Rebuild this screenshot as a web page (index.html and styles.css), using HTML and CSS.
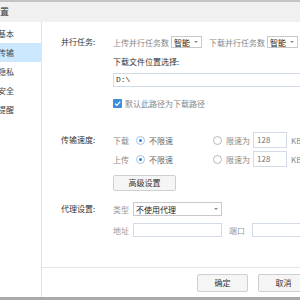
FILE: index.html
```html
<!DOCTYPE html>
<html>
<head>
	<title>设置</title>
	<meta charset="utf-8">
	<link rel="stylesheet" href="styles.css">
</head>
<body>
	<div class="window">
		<div class="title__bar">设置</div>
		<div class="window__body">
			<ul class="side__menu">
				<li>基本</li>
				<li class="active">传输</li>
				<li>隐私</li>
				<li>安全</li>
				<li>提醒</li>
			</ul>

			<div class="panel">
				<div class="form">

					<div class="section section--tasks">
						<div class="label">并行任务:</div>
						<div class="field">
							<div class="row">
								<span class="hint">上传并行任务数</span>
								<span class="select select--small">智能<i class="arrow"></i></span>
								<span class="hint">下载并行任务数</span>
								<span class="select select--small">智能<i class="arrow"></i></span>
							</div>
							<div class="caption">下载文件位置选择:</div>
							<div class="input input--path">D:\</div>
							<div class="row row--check">
								<span class="checkbox">
									<svg width="9" height="9" viewBox="0 0 9 9"><path d="M2 4.6 L3.9 6.4 L7.2 2.6" fill="none" stroke="#fff" stroke-width="1.3"/></svg>
								</span>
								<span class="hint">默认此路径为下载路径</span>
							</div>
						</div>
					</div>

					<div class="section section--speed">
						<div class="label">传输速度:</div>
						<div class="field">
							<div class="row row--speed">
								<span class="hint">下载</span>
								<span class="radio radio--on"></span>
								<span class="option">不限速</span>
								<span class="radio radio--far"></span>
								<span class="hint">限速为</span>
								<span class="input input--rate">128</span>
								<span class="unit">KB/s</span>
							</div>
							<div class="row row--speed row--next">
								<span class="hint">上传</span>
								<span class="radio radio--on"></span>
								<span class="option">不限速</span>
								<span class="radio radio--far"></span>
								<span class="hint">限速为</span>
								<span class="input input--rate">128</span>
								<span class="unit">KB/s</span>
							</div>
							<div class="btn btn--advanced">高级设置</div>
						</div>
					</div>

					<div class="section section--proxy">
						<div class="label">代理设置:</div>
						<div class="field">
							<div class="row row--proxy">
								<span class="hint hint--light">类型</span>
								<span class="select select--wide">不使用代理<i class="arrow"></i></span>
							</div>
							<div class="row row--proxy row--address">
								<span class="hint hint--light">地址</span>
								<span class="input input--address"></span>
								<span class="hint hint--light port__label">端口</span>
								<span class="input input--port"></span>
							</div>
						</div>
					</div>

				</div>

				<div class="footer">
					<div class="btn">确定</div>
					<div class="btn">取消</div>
				</div>
			</div>
		</div>
	</div>
</body>
</html>
```

FILE: styles.css
```css
* {
	box-sizing: border-box;
	margin: 0;
	padding: 0;
}

html, body {
	width: 300px;
	height: 300px;
	overflow: hidden;
}

body {
	font-family: "Noto Sans CJK SC", "Noto Sans", sans-serif;
	font-size: 8px;
	color: #333;
	background: #fff;
}

.window {
	width: 340px;
	height: 300px;
	margin-left: -18px;
	display: flex;
	flex-direction: column;
	border-bottom: 3px solid #a9a9a9;
}

.title__bar {
	flex: none;
	height: 22px;
	background: #f0f0f0;
	border-top: 2px solid #c4c4c4;
	padding-left: 9px;
	font-size: 9px;
	line-height: 20px;
}

.window__body {
	flex: 1;
	display: flex;
	min-width: 0;
}

.side__menu {
	flex: none;
	list-style: none;
	width: 60px;
	border-right: 1px solid #e3e3e3;
	padding-top: 2px;
}

.side__menu li {
	height: 19px;
	line-height: 19px;
	padding-left: 16px;
	color: #444;
}

.side__menu .active {
	background: #cce8ff;
}

.panel {
	flex: 1;
	min-width: 0;
	display: flex;
	flex-direction: column;
}

.form {
	flex: 1;
	padding-left: 19px;
}

.section {
	display: grid;
	grid-template-columns: 52px 1fr;
}

.section--tasks {
	margin-top: 14px;
}

.section--speed {
	margin-top: 23px;
}

.section--proxy {
	margin-top: 11px;
}

.label {
	line-height: 12px;
}

.section--speed .label {
	line-height: 16px;
}

.section--proxy .label {
	line-height: 14px;
}

.row {
	display: flex;
	align-items: center;
	height: 12px;
	white-space: nowrap;
}

.hint {
	color: #888;
}

.hint--light {
	color: #999;
}

.select {
	flex: none;
	display: flex;
	align-items: center;
	justify-content: space-between;
	height: 12px;
	border: 1px solid #c9c9c9;
	padding: 0 3px 0 2px;
	color: #222;
	background: #fff;
}

.select--small {
	width: 31px;
	margin: 0 7px 0 2px;
}

.select--wide {
	width: 89px;
	height: 14px;
	margin-left: 4px;
}

.arrow {
	border-left: 2px solid transparent;
	border-right: 2px solid transparent;
	border-top: 2px solid #8a8a8a;
}

.caption {
	margin-top: 8px;
	line-height: 12px;
}

.input {
	flex: none;
	display: block;
	height: 14px;
	border: 1px solid #d3dbe7;
	background: #fff;
	line-height: 12px;
}

.input--path {
	width: 220px;
	margin-top: 5px;
	padding-left: 2px;
	font-family: "Liberation Mono", monospace;
}

.row--check {
	margin-top: 10px;
}

.checkbox {
	flex: none;
	display: flex;
	width: 9px;
	height: 9px;
	margin-right: 3px;
	background: #3c8de0;
	border-radius: 1px;
}

.row--speed {
	height: 16px;
}

.row--next {
	margin-top: 3px;
}

.radio {
	flex: none;
	display: flex;
	align-items: center;
	justify-content: center;
	width: 9px;
	height: 9px;
	margin: 0 4px 0 7px;
	border: 1px solid #b8b8b8;
	border-radius: 50%;
}

.radio--on {
	border-color: #a8c2e2;
}

.radio--on::after {
	content: '';
	width: 3px;
	height: 3px;
	border-radius: 50%;
	background: #1f86e6;
}

.radio--far {
	margin-left: 40px;
}

.option {
	color: #666;
}

.input--rate {
	width: 34px;
	height: 16px;
	margin-left: 3px;
	padding-left: 3px;
	line-height: 14px;
	color: #777;
}

.unit {
	margin-left: 4px;
	color: #888;
}

.btn {
	flex: none;
	height: 16px;
	width: 63px;
	border: 1px solid #cfcfcf;
	border-radius: 2px;
	background: #f5f5f5;
	text-align: center;
	line-height: 14px;
}

.btn--advanced {
	margin-top: 8px;
}

.row--proxy {
	height: 14px;
}

.row--address {
	margin-top: 7px;
}

.input--address {
	width: 89px;
	margin-left: 4px;
}

.port__label {
	margin-left: 7px;
}

.input--port {
	width: 80px;
	margin-left: 7px;
}

.footer {
	flex: none;
	height: 30px;
	border-top: 1px solid #e5e5e5;
	display: flex;
	justify-content: flex-end;
	gap: 10px;
	padding: 6px 13px 0 0;
}

.footer .btn {
	width: 51px;
	height: 18px;
	line-height: 16px;
}
```
